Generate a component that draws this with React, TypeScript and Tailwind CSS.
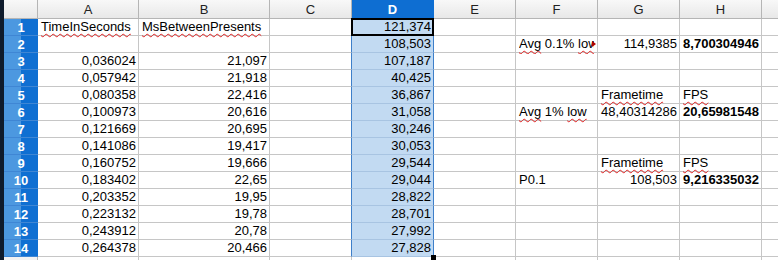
import React from "react";

type Cell = { t: string; align?: "l" | "r"; bold?: boolean; wavy?: boolean; clip?: boolean };

const colW = [101, 131, 82, 82, 82, 82, 82, 82, 40];
const letters = ["A", "B", "C", "D", "E", "F", "G", "H", ""];

const L = (t: string, wavy = false): Cell => ({ t, align: "l", wavy });
const R = (t: string, bold = false): Cell => ({ t, align: "r", bold });

const aCol = ["", "", "0,036024", "0,057942", "0,080358", "0,100973", "0,121669", "0,141086", "0,160752", "0,183402", "0,203352", "0,223132", "0,243912", "0,264378"];
const bCol = ["", "", "21,097", "21,918", "22,416", "20,616", "20,695", "19,417", "19,666", "22,65", "19,95", "19,78", "20,78", "20,466"];
const dCol = ["121,374", "108,503", "107,187", "40,425", "36,867", "31,058", "30,246", "30,053", "29,544", "29,044", "28,822", "28,701", "27,992", "27,828"];

function cellFor(r: number, c: number): Cell | null {
  if (c === 0) return r === 0 ? L("TimeInSeconds", true) : aCol[r] ? R(aCol[r]) : null;
  if (c === 1) return r === 0 ? L("MsBetweenPresents", true) : bCol[r] ? R(bCol[r]) : null;
  if (c === 3) return R(dCol[r]);
  if (c === 5) {
    if (r === 1) return { t: "Avg 0.1% low", align: "l", clip: true };
    if (r === 5) return { t: "Avg 1% low", align: "l" };
    if (r === 9) return L("P0.1");
  }
  if (c === 6) {
    if (r === 1) return R("114,9385");
    if (r === 4 || r === 8) return L("Frametime", true);
    if (r === 5) return R("48,40314286");
    if (r === 9) return R("108,503");
  }
  if (c === 7) {
    if (r === 1) return R("8,700304946", true);
    if (r === 4 || r === 8) return L("FPS", true);
    if (r === 5) return R("20,65981548", true);
    if (r === 9) return R("9,216335032", true);
  }
  return null;
}

const wavy =
  "underline decoration-wavy decoration-[#e02020] decoration-1 underline-offset-[2px] [text-decoration-skip-ink:none]";

function Text({ cell }: { cell: Cell }) {
  if (cell.clip) {
    return (
      <span className="block w-[75px] overflow-hidden whitespace-nowrap pb-[3px] -mb-[3px]">
        <span className={wavy}>Avg</span> 0.1% <span className={wavy}>low</span>
      </span>
    );
  }
  if (cell.t === "Avg 1% low") {
    return (
      <span className="whitespace-nowrap">
        <span className={wavy}>Avg</span> 1% <span className={wavy}>low</span>
      </span>
    );
  }
  return <span className={`whitespace-nowrap ${cell.wavy ? wavy : ""} ${cell.bold ? "font-bold" : ""}`}>{cell.t}</span>;
}

export default function App() {
  const rows = Array.from({ length: 15 }, (_, i) => i);
  return (
    <div className="w-[778px] h-[260px] overflow-hidden bg-white font-['Liberation_Sans',Arial,sans-serif] text-[13px] text-black flex">
      <div className="w-[4px] shrink-0 bg-[#0f1b2c]" />
      <div className="flex flex-col">
        <div className="flex h-[19px] shrink-0">
          <div className="w-[34px] shrink-0 border-r border-b border-[#b5b5b5] bg-gradient-to-b from-[#f8f8f8] to-[#e8e8e8]" />
          {colW.map((w, c) => (
            <div
              key={c}
              style={{ width: w }}
              className={`shrink-0 border-r border-b flex items-center justify-center leading-none ${
                c === 3
                  ? "bg-[#0e6ed2] text-white border-[#0e6ed2] font-bold"
                  : "bg-gradient-to-b from-[#f8f8f8] to-[#e8e8e8] text-[#222] border-[#b5b5b5]"
              }`}
            >
              {letters[c]}
            </div>
          ))}
        </div>
        {rows.map((r) => (
          <div key={r} className="flex h-[17px] shrink-0">
            {r < 14 ? (
              <div className="w-[34px] shrink-0 flex border-b border-[#3f86d4] relative">
                <div className="w-[17px] bg-[#4c98e0]" />
                <div className="w-[17px] bg-[#0f6fd2]" />
                <span className="absolute inset-0 flex items-center justify-center text-white font-bold leading-none pt-[1px]">{r + 1}</span>
              </div>
            ) : (
              <div className="w-[34px] shrink-0 border-r border-[#b5b5b5] bg-[#f2f2f2]" />
            )}
            {colW.map((w, c) => {
              const cell = r < 14 ? cellFor(r, c) : null;
              const sel = c === 3 && r < 14;
              return (
                <div
                  key={c}
                  style={{ width: w }}
                  className={`shrink-0 relative flex items-end pb-[1px] leading-[15px] border-r border-b ${
                    sel ? "bg-[#c2daf2] border-b-[#a8c4e2] border-r-[#3e7fc9]" : "border-[#c6c6c6]"
                  } ${c === 2 && r < 14 ? "border-r-[#3e7fc9]" : ""} ${
                    cell?.align === "r" ? "justify-end pr-[2px]" : "justify-start pl-[3px]"
                  }`}
                >
                  {cell && <Text cell={cell} />}
                  {cell?.clip && (
                    <span className="absolute right-[1px] top-[5px] w-0 h-0 border-y-[3px] border-y-transparent border-l-[4px] border-l-[#b00000]" />
                  )}
                  {sel && r === 0 && <span className="absolute inset-[-1px] border-2 border-black pointer-events-none" />}
                  {sel && r === 13 && <span className="absolute right-[-3px] bottom-[-4px] w-[5px] h-[5px] bg-black z-10" />}
                </div>
              );
            })}
          </div>
        ))}
      </div>
    </div>
  );
}
